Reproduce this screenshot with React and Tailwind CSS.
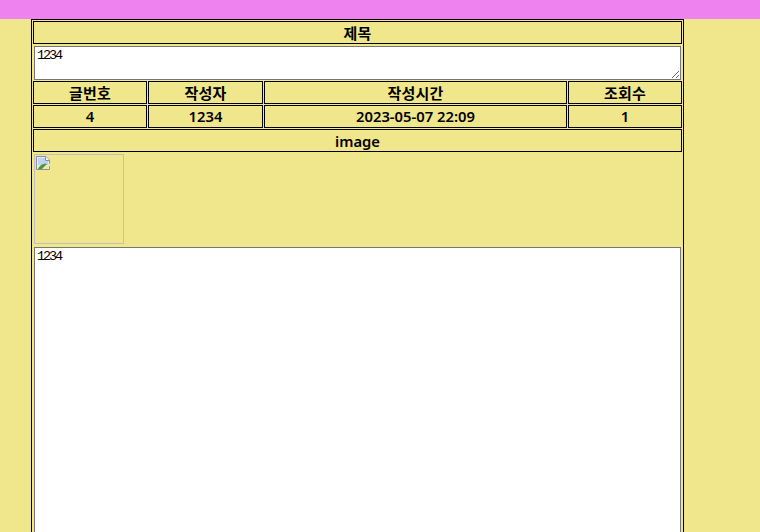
import React from 'react';

const cellClass = 'h-[23px] border border-black flex items-center justify-center font-semibold leading-none';
const koCell = `${cellClass} text-[15px] tracking-[0.2px] pt-px`;
const numCell = `${cellClass} text-[14.8px]`;

const BrokenImage = () => (
  <svg width="16" height="16" viewBox="0 0 16 16" className="block">
    <path d="M.5 .5H10L13.5 4V13.5H.5Z" fill="#e4ecfa" stroke="#8f8f8f" />
    <path d="M9.5 .5V4.5H13.5" fill="#ffffff" stroke="#8f8f8f" />
    <path d="M2 2h7v3h3v4H2Z" fill="#bdd2f5" />
    <path d="M2 13C3 10 7 7 11 8L6 13Z" fill="#4f9a26" />
    <path d="M8 13L14 7V10L11 13Z" fill="#f0e68c" />
  </svg>
);

const textareaClass = 'block w-[647px] border border-[#767676] bg-white text-black px-[2px] py-px font-["Liberation_Mono",monospace] text-[13.5px] leading-[16px] tracking-[-2.1px] outline-none';

export default function App() {
  return (
    <div className="h-[532px] overflow-hidden bg-[#f0e68c] font-['Noto_Sans','Noto_Sans_CJK_KR',sans-serif] text-black">
      <div className="h-[19px] bg-[#ee82ee]" />
      <div className="ml-[31px] w-[653px] border border-black p-px flex flex-col gap-px">
        <div className={koCell}>제목</div>
        <div className="pl-px pt-px">
          <textarea className={`${textareaClass} h-[34px] resize`} defaultValue="1234" />
        </div>
        <div className="grid grid-cols-[114px_115px_303px_114px] gap-px">
          <div className={koCell}>글번호</div>
          <div className={koCell}>작성자</div>
          <div className={koCell}>작성시간</div>
          <div className={koCell}>조회수</div>
        </div>
        <div className="grid grid-cols-[114px_115px_303px_114px] gap-px">
          <div className={numCell}>4</div>
          <div className={numCell}>1234</div>
          <div className={numCell}>2023-05-07 22:09</div>
          <div className={numCell}>1</div>
        </div>
        <div className={`${numCell} pt-px`}>image</div>
        <div className="pl-px pt-px">
          <div className="w-[90px] h-[90px] border border-[#c0c0c0] p-px">
            <BrokenImage />
          </div>
          <textarea className={`${textareaClass} mt-[3px] h-[400px] resize-none`} defaultValue="1234" />
        </div>
      </div>
    </div>
  );
}
